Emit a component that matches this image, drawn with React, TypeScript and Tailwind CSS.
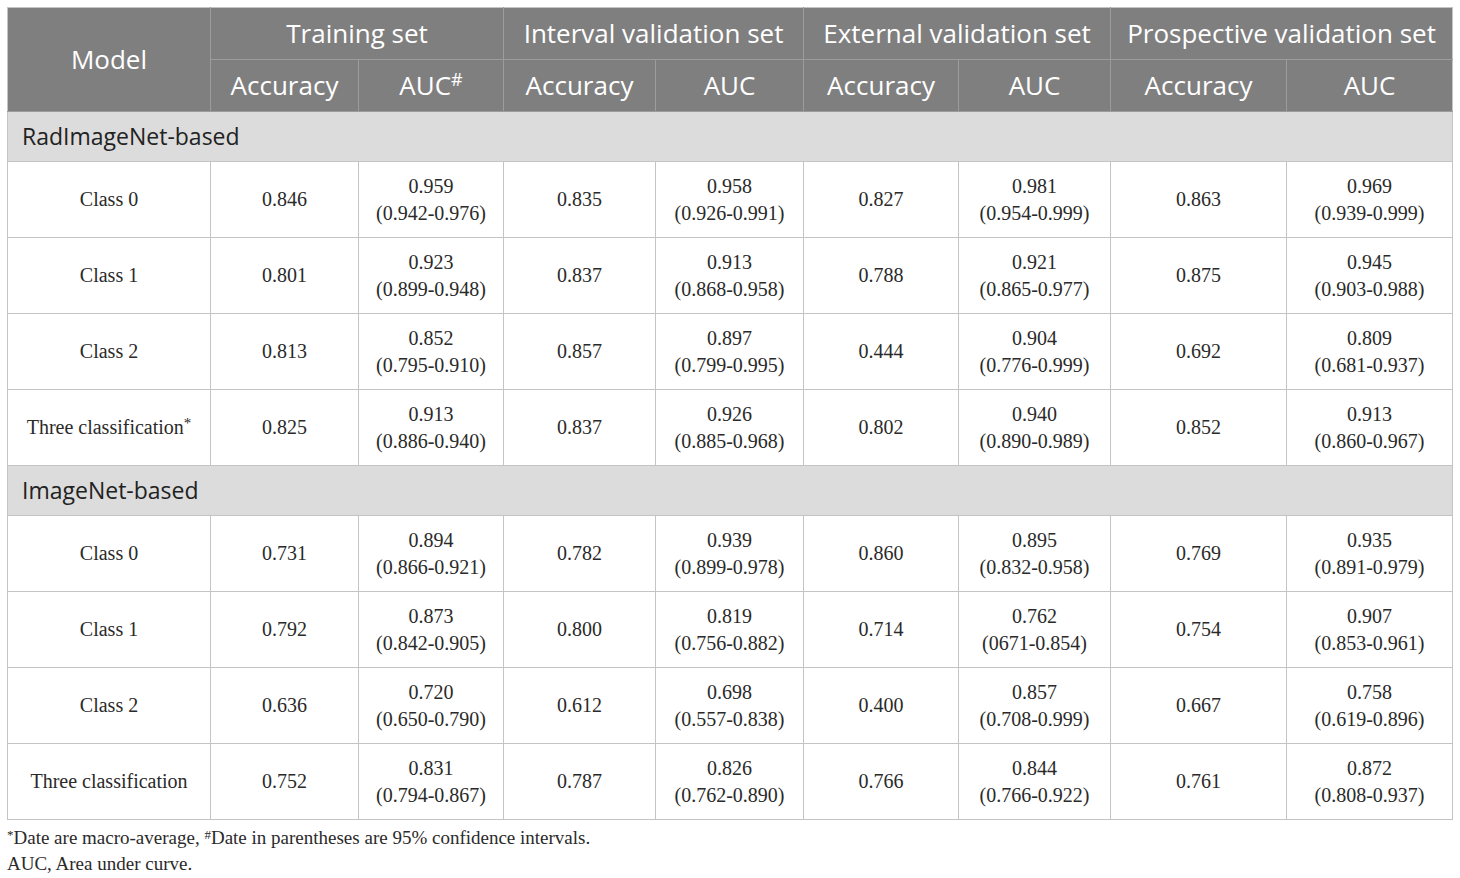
import React from 'react';

type Row = {
  name: string;
  star?: boolean;
  cells: [string, string, string][]; // accuracy, auc, ci per set
};

const sets = [
  'Training set',
  'Interval validation set',
  'External validation set',
  'Prospective validation set',
];

const radRows: Row[] = [
  {
    name: 'Class 0',
    cells: [
      ['0.846', '0.959', '(0.942-0.976)'],
      ['0.835', '0.958', '(0.926-0.991)'],
      ['0.827', '0.981', '(0.954-0.999)'],
      ['0.863', '0.969', '(0.939-0.999)'],
    ],
  },
  {
    name: 'Class 1',
    cells: [
      ['0.801', '0.923', '(0.899-0.948)'],
      ['0.837', '0.913', '(0.868-0.958)'],
      ['0.788', '0.921', '(0.865-0.977)'],
      ['0.875', '0.945', '(0.903-0.988)'],
    ],
  },
  {
    name: 'Class 2',
    cells: [
      ['0.813', '0.852', '(0.795-0.910)'],
      ['0.857', '0.897', '(0.799-0.995)'],
      ['0.444', '0.904', '(0.776-0.999)'],
      ['0.692', '0.809', '(0.681-0.937)'],
    ],
  },
  {
    name: 'Three classification',
    star: true,
    cells: [
      ['0.825', '0.913', '(0.886-0.940)'],
      ['0.837', '0.926', '(0.885-0.968)'],
      ['0.802', '0.940', '(0.890-0.989)'],
      ['0.852', '0.913', '(0.860-0.967)'],
    ],
  },
];

const imgRows: Row[] = [
  {
    name: 'Class 0',
    cells: [
      ['0.731', '0.894', '(0.866-0.921)'],
      ['0.782', '0.939', '(0.899-0.978)'],
      ['0.860', '0.895', '(0.832-0.958)'],
      ['0.769', '0.935', '(0.891-0.979)'],
    ],
  },
  {
    name: 'Class 1',
    cells: [
      ['0.792', '0.873', '(0.842-0.905)'],
      ['0.800', '0.819', '(0.756-0.882)'],
      ['0.714', '0.762', '(0671-0.854)'],
      ['0.754', '0.907', '(0.853-0.961)'],
    ],
  },
  {
    name: 'Class 2',
    cells: [
      ['0.636', '0.720', '(0.650-0.790)'],
      ['0.612', '0.698', '(0.557-0.838)'],
      ['0.400', '0.857', '(0.708-0.999)'],
      ['0.667', '0.758', '(0.619-0.896)'],
    ],
  },
  {
    name: 'Three classification',
    cells: [
      ['0.752', '0.831', '(0.794-0.867)'],
      ['0.787', '0.826', '(0.762-0.890)'],
      ['0.766', '0.844', '(0.766-0.922)'],
      ['0.761', '0.872', '(0.808-0.937)'],
    ],
  },
];

const sans = "font-['Open_Sans',sans-serif]";
const serif = "font-['Liberation_Serif',serif]";

function SectionRow({ label }: { label: string }) {
  return (
    <tr className="h-[50px] bg-[#dcdcdc]">
      <td
        colSpan={9}
        className={`border border-[#c4c4c4] pl-[14px] text-left text-[23px] text-[#222] ${sans}`}
      >
        {label}
      </td>
    </tr>
  );
}

function DataRow({ row }: { row: Row }) {
  return (
    <tr className="h-[76px]">
      <td className="border border-[#c4c4c4] pb-[2px] text-center">
        {row.name}
        {row.star && (
          <span className="relative -top-[6px] text-[15px]">*</span>
        )}
      </td>
      {row.cells.map(([acc, auc, ci], i) => (
        <React.Fragment key={i}>
          <td className="border border-[#c4c4c4] pb-[2px] text-center">{acc}</td>
          <td className="border border-[#c4c4c4] text-center leading-[27px]">
            <div>{auc}</div>
            <div>{ci}</div>
          </td>
        </React.Fragment>
      ))}
    </tr>
  );
}

export default function App() {
  return (
    <div className="min-h-screen bg-white pl-[7px] pt-[7px]">
      <table
        className={`w-[1445px] table-fixed border-collapse text-[20px] text-[#2a2a2a] ${serif}`}
      >
        <colgroup>
          <col className="w-[203px]" />
          <col className="w-[148px]" />
          <col className="w-[145px]" />
          <col className="w-[152px]" />
          <col className="w-[148px]" />
          <col className="w-[155px]" />
          <col className="w-[152px]" />
          <col className="w-[176px]" />
          <col className="w-[166px]" />
        </colgroup>
        <thead className={`bg-[#7f7f7f] text-[26px] font-normal text-white ${sans}`}>
          <tr className="h-[52px]">
            <th
              rowSpan={2}
              className="border border-[#9c9c9c] border-l-[#c4c4c4] border-t-[#c4c4c4] font-normal"
            >
              Model
            </th>
            {sets.map((s, i) => (
              <th
                key={s}
                colSpan={2}
                className={`border border-[#9c9c9c] border-t-[#c4c4c4] font-normal ${
                  i === 3 ? 'border-r-[#c4c4c4]' : ''
                }`}
              >
                {s}
              </th>
            ))}
          </tr>
          <tr className="h-[52px]">
            {sets.map((s, i) => (
              <React.Fragment key={s}>
                <th className="border border-[#9c9c9c] font-normal">Accuracy</th>
                <th
                  className={`border border-[#9c9c9c] font-normal ${
                    i === 3 ? 'border-r-[#c4c4c4]' : ''
                  }`}
                >
                  AUC
                  {i === 0 && (
                    <span className="relative -top-[9px] text-[18px]">#</span>
                  )}
                </th>
              </React.Fragment>
            ))}
          </tr>
        </thead>
        <tbody>
          <SectionRow label="RadImageNet-based" />
          {radRows.map((r) => (
            <DataRow key={'r' + r.name} row={r} />
          ))}
          <SectionRow label="ImageNet-based" />
          {imgRows.map((r) => (
            <DataRow key={'i' + r.name} row={r} />
          ))}
        </tbody>
      </table>
      <div className={`mt-[6px] text-[19px] leading-[24px] text-[#2a2a2a] ${serif}`}>
        <p>
          <span className="relative -top-[5px] text-[13px]">*</span>Date are
          macro-average,{' '}
          <span className="relative -top-[5px] text-[13px]">#</span>Date in
          parentheses are 95% confidence intervals.
        </p>
        <p>AUC, Area under curve.</p>
      </div>
    </div>
  );
}
